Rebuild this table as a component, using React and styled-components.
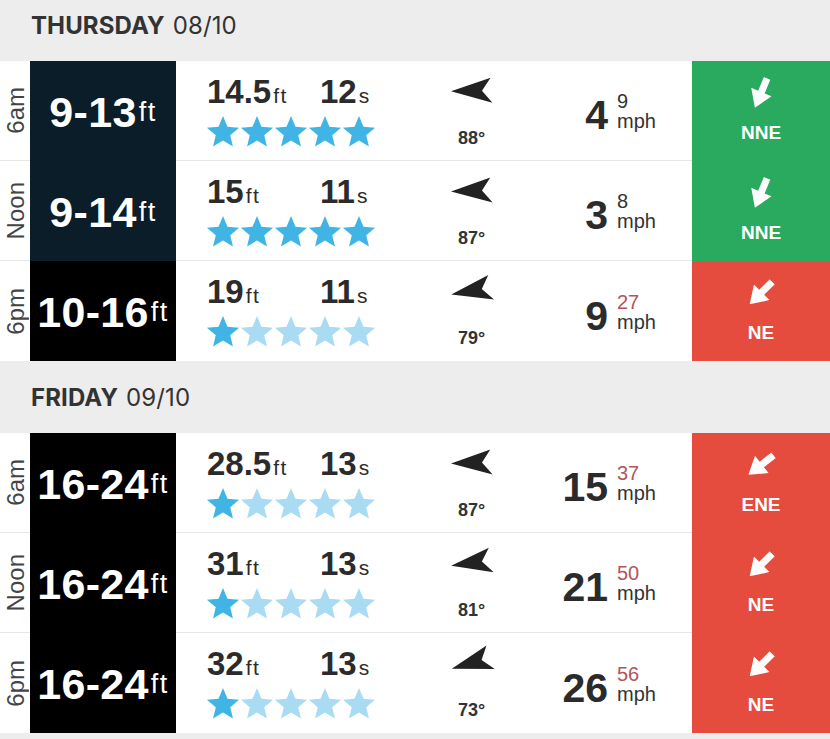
import React from "react";
import styled, { createGlobalStyle } from "styled-components";

const Global = createGlobalStyle`
  html, body { margin: 0; padding: 0; background: #ededed; }
  body { font-family: "Liberation Sans", Arial, sans-serif; color: #2b2b2b; overflow: hidden; }
`;

const Page = styled.div`
  width: 830px;
  margin-top: -11px;
  background: #ededed;
`;

const DayHeader = styled.div`
  height: 72px;
  display: flex;
  align-items: center;
  padding-left: 31px;
  font-family: Inter, "Noto Sans", sans-serif;
  font-size: 24px;
  color: #333;
  letter-spacing: 0.1px;
`;

const DayName = styled.span`
  font-weight: 700;
  margin-right: 8px;
`;

const DayDate = styled.span`
  font-weight: 400;
`;

const Row = styled.div`
  display: grid;
  grid-template-columns: 30px 146px 244px 105px 167px 138px;
  height: 100px;
  background: #fff;
`;

const Cell = styled.div`
  box-sizing: border-box;
  border-bottom: ${(p) => (p.$last ? "none" : "1px solid #e6e6e6")};
`;

const TimeCell = styled(Cell)`
  display: flex;
  align-items: center;
  justify-content: center;
  padding-left: 2px;
`;

const TimeLabel = styled.span`
  writing-mode: vertical-rl;
  transform: rotate(180deg);
  font-size: 24px;
  color: #444;
  line-height: 1;
`;

const HeightBlock = styled.div`
  background: ${(p) => (p.$navy ? "#0a1d28" : "#000")};
  color: #fff;
  display: flex;
  align-items: center;
  justify-content: center;
  white-space: nowrap;
  padding-top: 3px;
`;

const BigRange = styled.span`
  font-size: 43px;
  font-weight: 700;
  letter-spacing: 0.3px;
`;

const Unit = styled.span`
  font-size: ${(p) => p.$size || 21}px;
  font-weight: 400;
  margin-left: 2px;
  letter-spacing: 1.5px;
`;

const SwellCell = styled(Cell)`
  padding: 15px 0 0 31px;
`;

const SwellTop = styled.div`
  display: flex;
  align-items: baseline;
  line-height: 32px;
  white-space: nowrap;
`;

const SwellHeight = styled.div`
  width: 113px;
`;

const BoldNum = styled.span`
  font-size: 33px;
  font-weight: 700;
`;

const Stars = styled.div`
  display: flex;
  margin-top: 2px;
  margin-left: -1px;
`;

const DirCell = styled(Cell)`
  display: flex;
  flex-direction: column;
  align-items: center;
  padding-top: 17px;
  padding-right: 2px;
`;

const Degrees = styled.div`
  margin-top: 25px;
  font-size: 18px;
  font-weight: 700;
  line-height: 18px;
  color: #333;
`;

const WindCell = styled(Cell)`
  display: flex;
  align-items: center;
`;

const WindGroup = styled.div`
  display: flex;
  align-items: flex-end;
  margin-top: 5px;
`;

const WindSpeed = styled.div`
  width: 83px;
  text-align: right;
  font-size: 41px;
  font-weight: 700;
  line-height: 40px;
`;

const GustCol = styled.div`
  margin-left: 9px;
  padding-bottom: 4px;
  font-size: 20px;
  line-height: 20px;
  color: #333;
`;

const Gust = styled.div`
  color: ${(p) => (p.$strong ? "#b4545c" : "#333")};
`;

const WindBlock = styled.div`
  background: ${(p) => (p.$good ? "#2aaa5f" : "#e54c3d")};
  color: #fff;
  display: flex;
  flex-direction: column;
  align-items: center;
  padding-top: 15px;
`;

const WindArrowBox = styled.div`
  width: 34px;
  height: 34px;
  display: flex;
  align-items: center;
  justify-content: center;
`;

const Compass = styled.div`
  margin-top: 13px;
  font-size: 19px;
  font-weight: 700;
  line-height: 19px;
`;

function Star({ full }) {
  return (
    <svg width="34" height="31" viewBox="0 0 24 22">
      <polygon
        points="12,0 15.17,7.63 23.41,8.29 17.14,13.67 19.05,21.71 12,17.4 4.95,21.71 6.86,13.67 0.59,8.29 8.83,7.63"
        fill={full ? "#41b4e6" : "#a9dcf3"}
      />
    </svg>
  );
}

function SwellArrow({ deg }) {
  return (
    <svg
      width="42"
      height="26"
      viewBox="0 0 42 26"
      style={{ transform: `rotate(${deg - 90}deg)` }}
    >
      <polygon points="0,12.5 40,0.5 31,13 41,25.5" fill="#222" />
    </svg>
  );
}

function WindArrow({ deg }) {
  return (
    <svg
      width="22"
      height="32"
      viewBox="0 0 22 32"
      style={{ transform: `rotate(${deg}deg)` }}
    >
      <polygon points="7.5,0 14.5,0 14.5,15 22,15 11,32 0,15 7.5,15" fill="#fff" />
    </svg>
  );
}

const days = [
  {
    name: "THURSDAY",
    date: "08/10",
    rows: [
      { time: "6am", range: "9-13", navy: true, h: "14.5", p: "12", stars: 5, sd: 88, w: "4", g: "9", gs: false, dir: "NNE", wd: 22.5, good: true },
      { time: "Noon", range: "9-14", navy: true, h: "15", p: "11", stars: 5, sd: 87, w: "3", g: "8", gs: false, dir: "NNE", wd: 22.5, good: true },
      { time: "6pm", range: "10-16", navy: false, h: "19", p: "11", stars: 1, sd: 79, w: "9", g: "27", gs: true, dir: "NE", wd: 45, good: false },
    ],
  },
  {
    name: "FRIDAY",
    date: "09/10",
    rows: [
      { time: "6am", range: "16-24", navy: false, h: "28.5", p: "13", stars: 1, sd: 87, w: "15", g: "37", gs: true, dir: "ENE", wd: 52, good: false },
      { time: "Noon", range: "16-24", navy: false, h: "31", p: "13", stars: 1, sd: 81, w: "21", g: "50", gs: true, dir: "NE", wd: 45, good: false },
      { time: "6pm", range: "16-24", navy: false, h: "32", p: "13", stars: 1, sd: 73, w: "26", g: "56", gs: true, dir: "NE", wd: 45, good: false },
    ],
  },
];

function ForecastRow({ r, last }) {
  return (
    <Row>
      <TimeCell $last={last}>
        <TimeLabel>{r.time}</TimeLabel>
      </TimeCell>
      <HeightBlock $navy={r.navy}>
        <BigRange>{r.range}</BigRange>
        <Unit $size={27}>ft</Unit>
      </HeightBlock>
      <SwellCell $last={last}>
        <SwellTop>
          <SwellHeight>
            <BoldNum>{r.h}</BoldNum>
            <Unit>ft</Unit>
          </SwellHeight>
          <div>
            <BoldNum>{r.p}</BoldNum>
            <Unit>s</Unit>
          </div>
        </SwellTop>
        <Stars>
          {[0, 1, 2, 3, 4].map((i) => (
            <Star key={i} full={i < r.stars} />
          ))}
        </Stars>
      </SwellCell>
      <DirCell $last={last}>
        <SwellArrow deg={r.sd} />
        <Degrees>{r.sd}°</Degrees>
      </DirCell>
      <WindCell $last={last}>
        <WindGroup>
          <WindSpeed>{r.w}</WindSpeed>
          <GustCol>
            <Gust $strong={r.gs}>{r.g}</Gust>
            <div>mph</div>
          </GustCol>
        </WindGroup>
      </WindCell>
      <WindBlock $good={r.good}>
        <WindArrowBox>
          <WindArrow deg={r.wd} />
        </WindArrowBox>
        <Compass>{r.dir}</Compass>
      </WindBlock>
    </Row>
  );
}

export default function App() {
  return (
    <Page>
      <Global />
      {days.map((d) => (
        <section key={d.name}>
          <DayHeader>
            <DayName>{d.name}</DayName>
            <DayDate>{d.date}</DayDate>
          </DayHeader>
          {d.rows.map((r, i) => (
            <ForecastRow key={i} r={r} last={i === d.rows.length - 1} />
          ))}
        </section>
      ))}
    </Page>
  );
}
